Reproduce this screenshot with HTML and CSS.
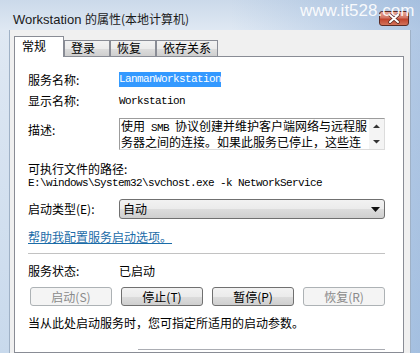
FILE: index.html
```html
<!DOCTYPE html>
<html lang="zh-CN">

<head>
    <meta charset="utf-8">
    <title>Workstation 的属性</title>
    <link rel="stylesheet" href="styles.css">
</head>

<body>
    <div class="window">
        <div class="titlebar">
            <span class="title">Workstation <span class="title-cjk">的属性(本地计算机)</span></span>
            <div class="close-btn">
                <svg width="28" height="13" viewBox="0 0 28 13">
                    <path d="M10 3 L18 10 M18 3 L10 10" stroke="#5a2a22" stroke-width="3.6" stroke-linecap="round" />
                    <path d="M10 3 L18 10 M18 3 L10 10" stroke="#ffffff" stroke-width="2" stroke-linecap="round" />
                </svg>
            </div>
        </div>

        <!-- site watermark sits over the title bar -->
        <div class="watermark">www.it528.com</div>

        <div class="client">
            <div class="tabs">
                <div class="tab active">常规</div>
                <div class="tab">登录</div>
                <div class="tab">恢复</div>
                <div class="tab">依存关系</div>
            </div>

            <div class="panel">
                <div class="row row-name">
                    <span class="label">服务名称:</span>
                    <span class="mono selected">LanmanWorkstation</span>
                </div>
                <div class="row row-display">
                    <span class="label">显示名称:</span>
                    <span class="mono">Workstation</span>
                </div>
                <div class="row row-desc">
                    <span class="label">描述:</span>
                    <div class="desc-box">
                        <div class="desc-text">使用<span class="mono"> SMB </span>协议创建并维护客户端网络与远程服<br>务器之间的连接。如果此服务已停止，这些连</div>
                        <div class="vscroll">
                            <svg width="15" height="14" viewBox="0 0 15 14"><path d="M4 9 L11 9 L7.5 5.5 Z" fill="#333" /></svg>
                            <svg width="15" height="14" viewBox="0 0 15 14"><path d="M4 5 L11 5 L7.5 8.5 Z" fill="#333" /></svg>
                        </div>
                    </div>
                </div>
                <div class="row row-path-label">可执行文件的路径:</div>
                <div class="row row-path mono">E:\windows\System32\svchost.exe -k NetworkService</div>
                <div class="row row-startup">
                    <span class="label">启动类型(E):</span>
                    <div class="combo">
                        <span>自动</span>
                        <svg width="9" height="5" viewBox="0 0 9 5"><path d="M0 0 L9 0 L4.5 5 Z" fill="#111" /></svg>
                    </div>
                </div>
                <div class="row row-link"><a class="help-link">帮助我配置服务启动选项。</a></div>

                <hr class="separator">

                <div class="row row-status">
                    <span class="label">服务状态:</span>
                    <span>已启动</span>
                </div>
                <div class="buttons">
                    <div class="btn disabled">启动(S)</div>
                    <div class="btn">停止(T)</div>
                    <div class="btn">暂停(P)</div>
                    <div class="btn disabled">恢复(R)</div>
                </div>
                <div class="row row-hint">当从此处启动服务时，您可指定所适用的启动参数。</div>
                <div class="row row-params">
                    <div class="params-input"></div>
                </div>
            </div>
        </div>
    </div>
</body>

</html>
```

FILE: styles.css
```css
body {
    margin: 0;
    width: 420px;
    height: 353px;
    overflow: hidden;
    font-family: "Noto Sans CJK SC", sans-serif;
    font-size: 12px;
    color: #000;
}

.window {
    position: relative;
    height: 353px;
    display: flex;
    flex-direction: column;
    background:
        linear-gradient(to right, rgba(255, 255, 255, 0) 55%, rgba(120, 160, 210, 0.45)),
        linear-gradient(to bottom, #cbd9ea, #dfe8f3 30px, #c8d9ec);
}

.titlebar {
    height: 30px;
    box-sizing: border-box;
    padding: 6px 11px 0 13px;
    display: flex;
    justify-content: space-between;
    align-items: center;
}

.title {
    font-family: "Liberation Sans", "Noto Sans CJK SC", sans-serif;
    font-size: 13px;
    color: #1a1a1a;
}

.title-cjk {
    font-family: "Noto Sans CJK SC", sans-serif;
    font-size: 12px;
}

.close-btn {
    width: 28px;
    height: 13px;
    border: 1px solid #5b2b24;
    border-radius: 3px;
    background: linear-gradient(to bottom, #e7a596 0%, #d27463 45%, #c0432c 55%, #d3735b 100%);
    display: flex;
}

.watermark {
    position: absolute;
    left: 300px;
    top: 1px;
    font-family: "Liberation Sans", sans-serif;
    font-size: 17px;
    color: rgba(255, 255, 255, 0.92);
    z-index: 2;
}

.client {
    flex: 1;
    display: flex;
    flex-direction: column;
    margin: 0 9px 0 9px;
    padding: 6px 6px 0 4px;
    background-color: #f0f0f0;
    border-left: 1px solid #9fb1c6;
    border-right: 1px solid #9fb1c6;
    min-height: 0;
}

.tabs {
    display: flex;
    align-items: flex-end;
    height: 21px;
    margin-bottom: -1px;
    position: relative;
    z-index: 1;
}

.tab {
    box-sizing: border-box;
    height: 16px;
    min-width: 46px;
    margin-bottom: 1px;
    padding: 0 6px;
    line-height: 14px;
    border: 1px solid #898c95;
    border-bottom: none;
    background: linear-gradient(to bottom, #f2f2f2 0%, #ebebeb 50%, #dddddd 50%, #cfcfcf 100%);
}

.tab.active {
    height: 21px;
    width: 50px;
    margin-bottom: 0;
    padding: 2px 0 0 7px;
    background: #fff;
}

.panel {
    flex: 1;
    background-color: #fff;
    border: 1px solid #898c95;
    padding: 15px 18px 0 13px;
    overflow: hidden;
}

.row {
    display: flex;
    align-items: center;
    height: 14px;
    line-height: 14px;
    white-space: nowrap;
}

.label {
    width: 91px;
    flex-shrink: 0;
}

.mono {
    font-family: "Liberation Mono", monospace;
    font-size: 11px;
    letter-spacing: -0.6px;
}

.row-name {
    height: 15px;
}

.selected {
    background-color: #3399ff;
    color: #fff;
    line-height: 15px;
}

.row-display {
    height: 15px;
    margin-top: 6px;
}

.row-desc {
    height: 32px;
    margin-top: 10px;
    align-items: flex-start;

    .label {
        padding-top: 5px;
    }
}

.desc-box {
    box-sizing: border-box;
    width: 266px;
    height: 32px;
    display: flex;
    border: 1px solid #dcdcdc;
    border-top-color: #9c9c9c;
    border-left-color: #9c9c9c;
    overflow: hidden;
}

.desc-text {
    flex: 1;
    line-height: 14px;
    padding-left: 1px;
}

.vscroll {
    width: 15px;
    display: flex;
    flex-direction: column;
    justify-content: space-between;
    background-color: #f4f4f4;
}

.row-path-label {
    margin-top: 12px;
}

.row-startup {
    height: 20px;
    margin-top: 9px;
}

.combo {
    box-sizing: border-box;
    width: 266px;
    height: 20px;
    padding: 0 4px 0 3px;
    display: flex;
    justify-content: space-between;
    align-items: center;
    border: 1px solid #707070;
    border-radius: 3px;
    background: linear-gradient(to bottom, #f2f2f2 0%, #ebebeb 50%, #dddddd 50%, #cfcfcf 100%);
}

.row-link {
    margin-top: 11px;
}

.help-link {
    color: #1b6ca8;
    text-decoration: underline;
}

.separator {
    margin: 9px 0 0 0;
    height: 0;
    border: none;
    border-top: 1px solid #c2c2c2;
    border-bottom: 1px solid #fff;
}

.row-status {
    margin-top: 9px;
}

.buttons {
    display: grid;
    grid-template-columns: repeat(4, 82px);
    gap: 9px;
    margin: 9px 0 0 2px;
}

.btn {
    box-sizing: border-box;
    height: 19px;
    line-height: 17px;
    text-align: center;
    border: 1px solid #707070;
    border-radius: 3px;
    background: linear-gradient(to bottom, #f2f2f2 0%, #ebebeb 50%, #dddddd 50%, #cfcfcf 100%);
}

.btn.disabled {
    border-color: #adb2b5;
    background: #f4f4f4;
    color: #8a8a8a;
}

.row-hint {
    margin-top: 10px;
}

.row-params {
    height: 20px;
    margin-top: 19px;
    padding-left: 110px;
    align-items: flex-start;
}

.params-input {
    width: 247px;
    height: 20px;
    border-top: 1px solid #abadb3;
}
```
